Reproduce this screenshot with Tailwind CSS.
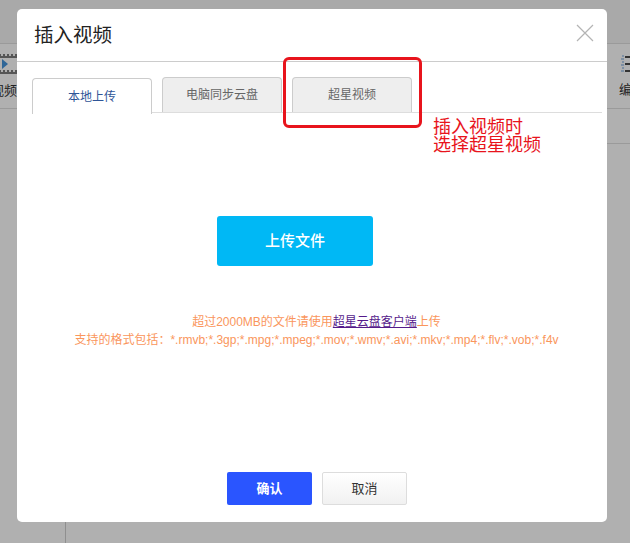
<!DOCTYPE html>
<html lang="en">
<head>
    <meta charset="UTF-8">
    <title>插入视频</title>
    <script src="https://cdn.jsdelivr.net/npm/@tailwindcss/browser@4"></script>
</head>
<body class="relative w-[630px] h-[543px] overflow-hidden bg-[#b0b0b0] font-['Liberation_Sans','Noto_Sans_CJK_SC',sans-serif]">
    <!-- page behind the overlay -->
    <div class="h-[44px] bg-[#a9a9a9] border-b border-[#9a9a9a]"></div>
    <div class="flex justify-between h-[65px] border-b border-[#9a9a9a] text-[13px] leading-[16px] text-[#222]">
        <div class="w-[17px] overflow-hidden">
            <svg class="mt-[9px]" width="17" height="22" viewBox="0 0 17 22">
                <rect x="0" y="1" width="17" height="4" fill="#555"/>
                <rect x="0" y="17" width="17" height="4" fill="#555"/>
                <path d="M1 2h2M5 2h2M9 2h2M13 2h2M1 18h2M5 18h2M9 18h2M13 18h2" stroke="#ccc" stroke-width="1.5"/>
                <path d="M2 6l6 5-6 5z" fill="#2f6697"/>
            </svg>
            <div class="mt-[8px] ml-[-9px] whitespace-nowrap">视频</div>
        </div>
        <div class="w-[23px] overflow-hidden">
            <svg class="mt-[10px] ml-[14px]" width="9" height="20" viewBox="0 0 9 20">
                <path d="M1 2h2M0 5h3M1 8h2M0 11h3M1 14h2M0 17h3" stroke="#4a6f96" stroke-width="1.2"/>
                <path d="M4 3h5M4 10h5M4 17h5" stroke="#333" stroke-width="2"/>
            </svg>
            <div class="mt-[8px] ml-[12px] whitespace-nowrap">编辑</div>
        </div>
    </div>
    <div class="flex justify-end">
        <div class="w-[23px] h-[35px] border-b border-[#9a9a9a]"></div>
    </div>
    <div class="absolute left-[65px] top-[522px] w-px h-[21px] bg-[#8f8f8f]"></div>

    <!-- modal -->
    <div class="absolute left-[17px] top-[9px] w-[590px] h-[513px] flex flex-col bg-white rounded-[5px]">
        <div class="flex justify-between h-[53px] border-b border-[#ccc] pl-[17px] pr-[13px]">
            <h2 class="mt-[12px] text-[19.5px] leading-[28px] font-normal text-[#222]">插入视频</h2>
            <svg class="mt-[15px]" width="18" height="18" viewBox="0 0 18 18">
                <path d="M1 1l16 16M17 1L1 17" stroke="#b4b4b4" stroke-width="1.2" fill="none"/>
            </svg>
        </div>

        <div class="flex gap-[10px] h-[51px] ml-[15px] mr-[5px] pt-[15px] border-b border-[#ddd] text-[12px]">
            <div class="w-[120px] h-[36px] mt-px flex items-center justify-center rounded-t-[4px] border border-b-0 border-[#ccc] bg-white text-[#2f5597]">本地上传</div>
            <div class="w-[120px] h-[35px] flex items-center justify-center rounded-t-[4px] border border-b-0 border-[#ccc] bg-[#eeeeee] text-[#666]">电脑同步云盘</div>
            <div class="w-[120px] h-[35px] flex items-center justify-center rounded-t-[4px] border border-b-0 border-[#ccc] bg-[#eeeeee] text-[#666]">超星视频</div>
        </div>

        <div class="ml-[200px] mt-[103px]">
            <button class="w-[156px] h-[50px] rounded-[3px] bg-[#00b8f5] text-white text-[15px] font-medium">上传文件</button>
        </div>

        <div class="mt-[47px] pl-[9px] text-center text-[12px] leading-[18px] text-[#fa965c]">
            <p>超过2000MB的文件请使用<a href="#" class="underline text-[#551a8b]">超星云盘客户端</a>上传</p>
            <p>支持的格式包括：*.rmvb;*.3gp;*.mpg;*.mpeg;*.mov;*.wmv;*.avi;*.mkv;*.mp4;*.flv;*.vob;*.f4v</p>
        </div>

        <div class="flex gap-[10px] ml-[210px] mt-[123px]">
            <button class="w-[85px] h-[33px] rounded-[2px] bg-[#2a55ff] text-white text-[13px] font-bold">确认</button>
            <button class="w-[85px] h-[33px] rounded-[2px] border border-[#ddd] bg-gradient-to-b from-white to-[#f1f1f1] text-[#333] text-[13px]">取消</button>
        </div>
    </div>

    <!-- annotation on top of the screenshot -->
    <div class="absolute left-[283px] top-[57px] w-[139px] h-[71px] rounded-[6px] border-[3px] border-[#e8141c]"></div>
    <div class="absolute left-[433px] top-[118px] text-[18px] leading-[18px] text-[#e8141c]">插入视频时<br>选择超星视频</div>
</body>
</html>
